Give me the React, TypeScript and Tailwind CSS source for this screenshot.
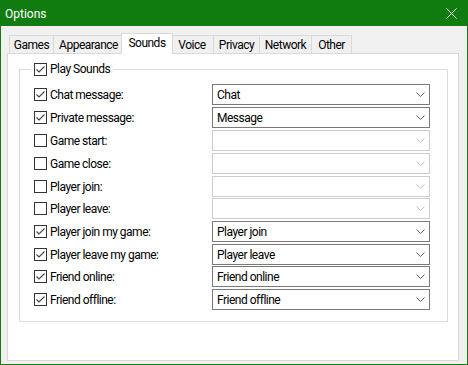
import React from "react";

const FONT = { fontFamily: 'Roboto, "Noto Sans", sans-serif' };

function Check({ checked }: { checked: boolean }) {
  return (
    <svg width="13" height="13" viewBox="0 0 13 13" className="shrink-0">
      <rect x="0.5" y="0.5" width="12" height="12" fill="#ffffff" stroke="#333333" />
      {checked && (
        <path d="M2.5 6.5 L5 9 L10.5 3.5" fill="none" stroke="#444444" strokeWidth="1.1" />
      )}
    </svg>
  );
}

function Combo({ value, disabled }: { value?: string; disabled?: boolean }) {
  return (
    <div
      className={
        "flex h-[21px] w-[218px] items-center justify-between border pl-[4px] pr-[4px] text-[12px] " +
        (disabled ? "border-[#cccccc] bg-white" : "border-[#7a7a7a] bg-white text-black")
      }
    >
      <span className="leading-none">{value}</span>
      <svg width="9" height="5" viewBox="0 0 9 5">
        <path
          d="M0.5 0.5 L4.5 4.5 L8.5 0.5"
          fill="none"
          stroke={disabled ? "#c4c4c4" : "#606060"}
          strokeWidth="1"
        />
      </svg>
    </div>
  );
}

const rows: { label: string; checked: boolean; value?: string; h: string }[] = [
  { label: "Chat message:", checked: true, value: "Chat", h: "h-[23px]" },
  { label: "Private message:", checked: true, value: "Message", h: "h-[23px]" },
  { label: "Game start:", checked: false, h: "h-[23px]" },
  { label: "Game close:", checked: false, h: "h-[23px]" },
  { label: "Player join:", checked: false, h: "h-[22px]" },
  { label: "Player leave:", checked: false, h: "h-[23px]" },
  { label: "Player join my game:", checked: true, value: "Player join", h: "h-[23px]" },
  { label: "Player leave my game:", checked: true, value: "Player leave", h: "h-[22px]" },
  { label: "Friend online:", checked: true, value: "Friend online", h: "h-[23px]" },
  { label: "Friend offline:", checked: true, value: "Friend offline", h: "h-[23px]" },
];

const tab =
  "flex h-[18px] items-center justify-center border-l border-r border-t border-[#d9d9d9] bg-[#f0f0f0]";

export default function App() {
  return (
    <div
      style={FONT}
      className="flex h-[365px] w-[468px] flex-col border border-[#107c10] bg-[#f0f0f0] text-[12px] text-black"
    >
      {/* Title bar */}
      <div className="flex h-[25px] shrink-0 items-center justify-between bg-[#107c10] pl-[4px] pr-[10px] text-white">
        <span className="text-[12px]">Options</span>
        <svg width="11" height="11" viewBox="0 0 11 11">
          <path d="M0.5 0.5 L10.5 10.5 M10.5 0.5 L0.5 10.5" stroke="#ffffff" strokeWidth="1" />
        </svg>
      </div>

      {/* Body */}
      <div className="flex flex-col pl-[6px] pt-[7px] tracking-[-0.5px]">
        {/* Tabs */}
        <div className="flex h-[20px] items-end pl-[2px]">
          <div className={tab + " w-[45px]"}>Games</div>
          <div className={tab + " -ml-[1px] w-[71px]"}>Appearance</div>
          <div className="relative z-10 -mb-[1px] -ml-[3px] flex h-[21px] w-[52px] items-center justify-center border-l border-r border-t border-[#d9d9d9] bg-white pb-[2px]">
            Sounds
          </div>
          <div className={tab + " -ml-[3px] w-[44px]"}>Voice</div>
          <div className={tab + " -ml-[1px] w-[47px]"}>Privacy</div>
          <div className={tab + " -ml-[1px] w-[53px]"}>Network</div>
          <div className={tab + " -ml-[1px] w-[41px]"}>Other</div>
        </div>

        {/* Panel */}
        <div className="h-[308px] w-[452px] border border-[#d9d9d9] bg-white pl-[11px] pt-[15px]">
          {/* Group box */}
          <div className="relative h-[253px] w-[429px] border border-[#dcdcdc] pl-[14px] pt-[14px]">
            <div className="absolute left-[11px] top-[-7px] flex items-center gap-[3px] bg-white px-[3px]">
              <Check checked={true} />
              <span className="leading-[13px]">Play Sounds</span>
            </div>
            <div className="flex flex-col">
              {rows.map((r) => (
                <div key={r.label} className={"flex items-start " + r.h}>
                  <div className="flex h-[21px] w-[178px] items-center gap-[3px]">
                    <Check checked={r.checked} />
                    <span>{r.label}</span>
                  </div>
                  <Combo value={r.value} disabled={!r.value} />
                </div>
              ))}
            </div>
          </div>
        </div>
      </div>
    </div>
  );
}
